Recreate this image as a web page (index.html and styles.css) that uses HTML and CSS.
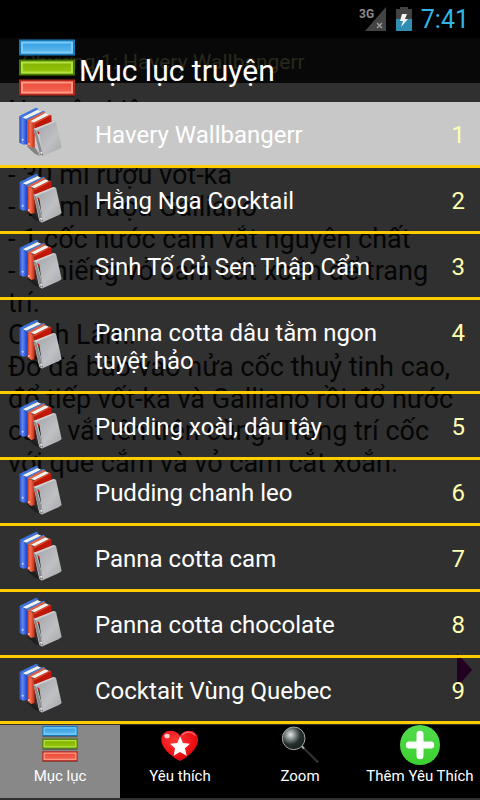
FILE: index.html
```html
<!DOCTYPE html>
<html lang="vi">
<head>
  <meta charset="utf-8" />
  <meta name="viewport" content="width=device-width, initial-scale=1" />
  <title>Mục lục truyện</title>
  <link rel="stylesheet" href="styles.css">
</head>
<body>
  <!-- shared icons -->
  <svg class="defs" width="0" height="0" aria-hidden="true">
    <defs>
      <linearGradient id="blueBar" x1="0" y1="0" x2="0" y2="1"><stop offset="0" stop-color="#2b9be2"/><stop offset="1" stop-color="#6cbef0"/></linearGradient>
      <linearGradient id="greenBar" x1="0" y1="0" x2="0" y2="1"><stop offset="0" stop-color="#7fae00"/><stop offset="1" stop-color="#9acb0c"/></linearGradient>
      <linearGradient id="redBar" x1="0" y1="0" x2="0" y2="1"><stop offset="0" stop-color="#ea4634"/><stop offset="1" stop-color="#f56d58"/></linearGradient>
      <linearGradient id="blueBook" x1="0" y1="0" x2="1" y2="0"><stop offset="0" stop-color="#2448c0"/><stop offset=".4" stop-color="#5b86f4"/><stop offset="1" stop-color="#1b3ec4"/></linearGradient>
      <linearGradient id="redBook" x1="0" y1="0" x2="1" y2="0"><stop offset="0" stop-color="#c8351c"/><stop offset=".4" stop-color="#f4714f"/><stop offset="1" stop-color="#c4260e"/></linearGradient>
      <linearGradient id="greyBook" x1="0" y1="0" x2="1" y2="1"><stop offset="0" stop-color="#a2a3a6"/><stop offset=".6" stop-color="#bfc0c3"/><stop offset="1" stop-color="#a4a5a8"/></linearGradient>
      <radialGradient id="heartFill" cx=".4" cy=".3" r=".8"><stop offset="0" stop-color="#fb3a38"/><stop offset=".6" stop-color="#ee1015"/><stop offset="1" stop-color="#c8060c"/></radialGradient>
      <radialGradient id="lens" cx=".36" cy=".34" r=".66"><stop offset="0" stop-color="#e4e8e8"/><stop offset=".3" stop-color="#8a9292"/><stop offset=".65" stop-color="#26302f"/><stop offset="1" stop-color="#172321"/></radialGradient>
      <linearGradient id="plusFill" x1="0" y1="0" x2="0" y2="1"><stop offset="0" stop-color="#53dc4d"/><stop offset="1" stop-color="#3bd02f"/></linearGradient>
    </defs>
    <symbol id="bars" viewBox="0 0 56 57">
      <path d="M-1 55H57V58H-1ZM0 16H56V18H0ZM0 36H56V38H0Z" fill="#000" opacity=".3"/>
      <rect x="1" y="1" width="54" height="14" fill="url(#blueBar)" stroke="#1778b8" stroke-width="2"/>
      <rect x="3" y="3" width="50" height="10" fill="none" stroke="#7ccbf6" stroke-width="2"/>
      <rect x="1" y="21" width="54" height="14" fill="url(#greenBar)" stroke="#467a00" stroke-width="2"/>
      <rect x="3" y="23" width="50" height="10" fill="none" stroke="#b5e044" stroke-width="2"/>
      <rect x="1" y="41" width="54" height="14" fill="url(#redBar)" stroke="#b4281c" stroke-width="2"/>
      <rect x="3" y="43" width="50" height="10" fill="none" stroke="#ff9884" stroke-width="2"/>
    </symbol>
    <symbol id="books" viewBox="57 22 132 150">
      <path d="M80 140 104 142 122 170 104 162Z" fill="#000" opacity=".35"/>
      <path d="M58 49 82 60V134L70 135 58 129Z" fill="url(#blueBook)"/>
      <path d="M58 49 108 24 116 28 68 54Z" fill="#3b74da"/>
      <path d="M68 53 112 31 124 36 80 58Z" fill="#eef1f1"/>
      <path d="M78 57 130 33 136 37 84 64Z" fill="#3f7ae0"/>
      <path d="M82 62 104 71V142L94 145 82 137Z" fill="url(#redBook)"/>
      <path d="M82 62 130 36 137 39 92 66Z" fill="#e0613f"/>
      <path d="M104 71 154 45 155 70 140 90 104 110Z" fill="#c01808"/>
      <path d="M92 64 136 41 148 46 106 68Z" fill="#f1f3f1"/>
      <path d="M100 69 148 45 154 46 104 74Z" fill="#dc4a2c"/>
      <path d="M101 88 109 84 130 164 127 171 118 166Z" fill="#d3d4d6"/>
      <path d="M101 88 161 64 168 66 185 142 177 148 128 170 118 98Z" fill="url(#greyBook)"/>
      <path d="M101 88 161 64 165 67 107 92Z" fill="#cfd0d2"/>
      <path d="M101 88 109 93 130 168 120 166Z" fill="#8a8b8e"/>
      <circle cx="68" cy="120" r="3" fill="#c9d8ff"/>
      <circle cx="87" cy="133" r="3" fill="#ffc9b4"/>
      <circle cx="124" cy="159" r="3" fill="#eee"/>
    </symbol>
  </svg>

  <div class="screen">
    <header class="status-bar">
      <svg class="signal" viewBox="0 0 28 24" width="28" height="24" role="img" aria-label="3G">
        <path d="M27 0V24H6Z" fill="#434343"/>
        <path d="M18 16 23 21M23 16 18 21" stroke="#a0a0a0" stroke-width="1.4"/>
        <text class="signal-text" x="0" y="11">3G</text>
      </svg>
      <svg class="battery" viewBox="0 0 16 24" width="16" height="24" role="img" aria-label="Pin">
        <path d="M4 0H12V2H16V12H0V2H4Z" fill="#434343"/>
        <path d="M0 12H16V24H0Z" fill="#318db2"/>
        <path d="M6 7H11L9 12H12L5 20 7 14H4Z" fill="#f4f4f4"/>
      </svg>
      <time class="clock">7:41</time>
    </header>

    <div class="content">
      <!-- story page underneath the menu -->
      <main class="story">
        <h2 class="chapter">Chương 1: Havery Wallbangerr</h2>
        <p class="story-text">Nguyên Liệu:<br/>
          <br/>
          - 30 ml rượu vốt-ka<br/>
          - 15 ml rượu Galliano<br/>
          - 1 cốc nước cam vắt nguyên chất<br/>
          - 1 miếng vỏ cam cắt xoắn để trang<br/>
          trí.<br/>
          Cách Làm:<br/>
          Đổ đá bào vào nửa cốc thuỷ tinh cao,<br/>
          đổ tiếp vốt-ka và Galliano rồi đổ nước<br/>
          cam vắt lên trên cùng. Trang trí cốc<br/>
          với que cắm và vỏ cam cắt xoắn.</p>
        <svg class="next" viewBox="0 0 15 34" width="15" height="34" aria-hidden="true"><path d="M0 0 15 17 0 34Z" fill="#210021"/></svg>
      </main>

      <section class="menu">
        <h1 class="menu-title">
          <svg class="title-icon" aria-hidden="true"><use href="#bars"/></svg>
          <span>Mục lục truyện</span>
        </h1>
        <ol class="chapters">
          <li><a class="row selected" href="#c1"><svg class="book" aria-hidden="true"><use href="#books"/></svg><span class="name">Havery Wallbangerr</span><span class="num">1</span></a></li>
          <li><a class="row" href="#c2"><svg class="book" aria-hidden="true"><use href="#books"/></svg><span class="name">Hằng Nga Cocktail</span><span class="num">2</span></a></li>
          <li><a class="row" href="#c3"><svg class="book" aria-hidden="true"><use href="#books"/></svg><span class="name">Sinh Tố Củ Sen Thập Cẩm</span><span class="num">3</span></a></li>
          <li><a class="row" href="#c4"><svg class="book" aria-hidden="true"><use href="#books"/></svg><span class="name">Panna cotta dâu tằm ngon tuyệt hảo</span><span class="num">4</span></a></li>
          <li><a class="row" href="#c5"><svg class="book" aria-hidden="true"><use href="#books"/></svg><span class="name">Pudding xoài, dâu tây</span><span class="num">5</span></a></li>
          <li><a class="row" href="#c6"><svg class="book" aria-hidden="true"><use href="#books"/></svg><span class="name">Pudding chanh leo</span><span class="num">6</span></a></li>
          <li><a class="row" href="#c7"><svg class="book" aria-hidden="true"><use href="#books"/></svg><span class="name">Panna cotta cam</span><span class="num">7</span></a></li>
          <li><a class="row" href="#c8"><svg class="book" aria-hidden="true"><use href="#books"/></svg><span class="name">Panna cotta chocolate</span><span class="num">8</span></a></li>
          <li><a class="row" href="#c9"><svg class="book" aria-hidden="true"><use href="#books"/></svg><span class="name">Cocktait Vùng Quebec</span><span class="num">9</span></a></li>
        </ol>
      </section>
    </div>

    <nav class="tabs">
      <button class="tab active" type="button">
        <svg class="tab-icon" viewBox="0 0 40 40" aria-hidden="true"><use href="#bars" x="2" y="1" width="36" height="36"/></svg>
        Mục lục
      </button>
      <button class="tab" type="button">
        <svg class="tab-icon" viewBox="0 0 120 120" aria-hidden="true">
          <path d="M60 108C38 96 4 72 4 44 4 12 46 10 60 32 74 10 114 12 114 44 114 72 82 96 60 108Z" fill="url(#heartFill)"/>
          <path d="M66 30C76 18 96 18 106 32" fill="none" stroke="#ff8a88" stroke-width="4" opacity=".7"/>
          <ellipse cx="21" cy="33" rx="8" ry="7" fill="#fff" opacity=".8"/>
          <path d="M60 34 69 54 90 56 75 70 80 92 60 81 41 92 45 70 30 56 52 54Z" fill="#fff"/>
        </svg>
        Yêu thích
      </button>
      <button class="tab" type="button">
        <svg class="tab-icon" viewBox="0 0 120 120" aria-hidden="true">
          <path d="M66 64 112 110" stroke="#4a4a4a" stroke-width="6" stroke-linecap="round"/>
          <path d="M66 64 110 108" stroke="#191919" stroke-width="3"/>
          <path d="M64 62 72 71" stroke="#aaa" stroke-width="6"/>
          <circle cx="41" cy="40" r="34" fill="url(#lens)" stroke="#a9a9a9" stroke-width="3"/>
        </svg>
        Zoom
      </button>
      <button class="tab" type="button">
        <svg class="tab-icon" viewBox="0 0 120 120" aria-hidden="true">
          <circle cx="60" cy="60" r="60" fill="url(#plusFill)"/>
          <path d="M60 28V92M28 60H92" stroke="#fff" stroke-width="21" stroke-linecap="round"/>
        </svg>
        Thêm Yêu Thích
      </button>
    </nav>
  </div>
</body>
</html>
```
FILE: styles.css
```css
body{
    margin: 0;
    background: #303030;
    font-family: Roboto, "Noto Sans", sans-serif;
    color: #fff;
}

.defs{
    position: absolute;
}

.screen{
    display: flex;
    flex-direction: column;
    min-height: 100vh;
}

/* status bar */
.status-bar{
    display: flex;
    justify-content: flex-end;
    align-items: center;
    height: 38px;
    padding-right: 11px;
    background: #000;
}

.signal-text{
    font-size: 12px;
    font-weight: bold;
    fill: #8a8a8a;
}

.battery{
    margin: 0 9px;
}

.clock{
    font-size: 25px;
    color: #33b5e5;
}

/* story */
.content{
    position: relative;
    flex: 1;
}

.story{
    position: absolute;
    top: 0;
    right: 0;
    bottom: 0;
    left: 0;
    overflow: hidden;
}

.chapter{
    margin: 0;
    padding: 3px 0 0 22px;
    background: #080808;
    color: #29291b;
    font-size: 21px;
    font-weight: normal;
    line-height: 42px;
}

.story-text{
    margin: 0;
    padding: 12px 8px;
    color: #050505;
    font-size: 27px;
    line-height: 32px;
    white-space: nowrap;
}

.next{
    position: absolute;
    right: 8px;
    bottom: 37px;
}

/* chapter menu */
.menu{
    position: relative;
}

.menu-title{
    display: flex;
    align-items: center;
    gap: 4px;
    height: 64px;
    margin: 0;
    padding-left: 19px;
    font-size: 30px;
    font-weight: normal;
}

.title-icon{
    width: 56px;
    height: 58px;
    margin-bottom: 4px;
}

.chapters{
    list-style: none;
    margin: 0;
    padding: 0;
}

.row{
    display: flex;
    align-items: center;
    border-bottom: 3px solid #fc0;
    padding: 0 15px 0 19px;
    color: #fff;
    font-size: 24px;
    line-height: 28px;
    text-decoration: none;
}

.selected{
    background: #c8c8c8;
}

.book{
    width: 44px;
    height: 50px;
    margin: 0 32px 3px 0;
}

.name{
    flex: 1;
    padding: 19px 32px 16px 0;
}

.num{
    align-self: flex-start;
    padding-top: 19px;
    color: #ffffb0;
}

/* bottom tabs */
.tabs{
    display: grid;
    grid-template-columns: repeat(4, 1fr);
    margin: 1px 0 2px;
    background: #000;
}

.tab{
    display: flex;
    flex-direction: column;
    align-items: center;
    height: 73px;
    padding: 0;
    border: 0;
    background: none;
    color: #fff;
    font-family: inherit;
    font-size: 15px;
    line-height: 22px;
    white-space: nowrap;
}

.active{
    background: #888;
}

.tab-icon{
    width: 40px;
    height: 40px;
}
```
